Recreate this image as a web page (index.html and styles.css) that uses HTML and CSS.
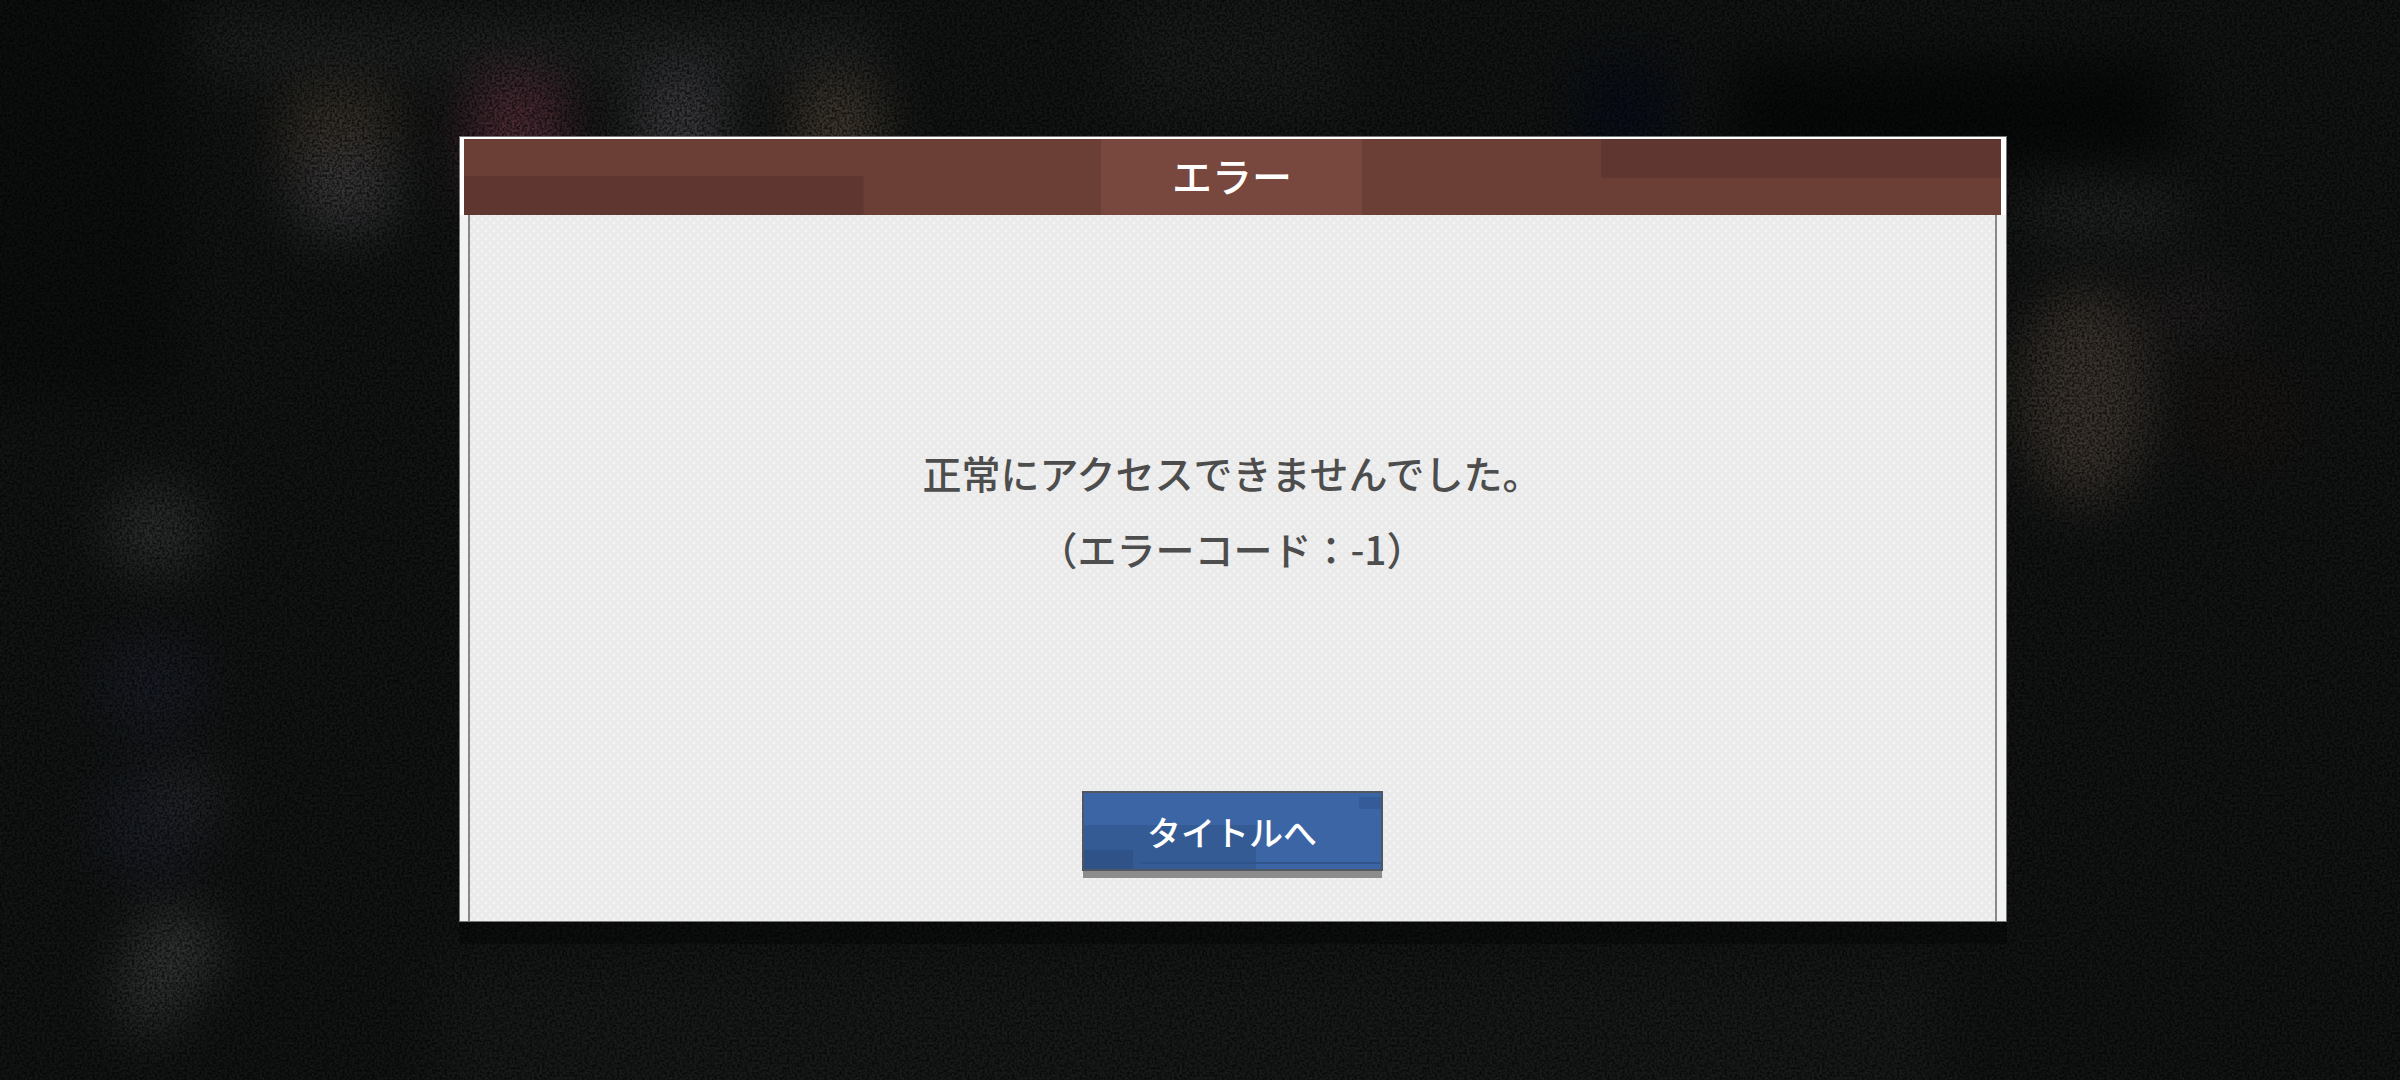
FILE: index.html
```html
<!DOCTYPE html>
<html lang="ja">

<head>
    <title>エラー</title>
    <meta charset="UTF-8">
    <meta name="viewport" content="width=device-width, initial-scale=1.0">
    <link rel="stylesheet" href="styles.css">
</head>

<body>
    <!-- ぼかした背景 -->
    <svg class="backdrop" viewBox="0 0 2400 1080" preserveAspectRatio="xMidYMid slice" aria-hidden="true">
        <filter id="blur" filterUnits="userSpaceOnUse" x="-200" y="-200" width="2800" height="1480" color-interpolation-filters="sRGB">
            <feGaussianBlur stdDeviation="26" />
        </filter>
        <g filter="url(#blur)">
            <rect x="-200" y="-200" width="2800" height="1480" fill="#121514" />
            <rect x="-200" y="-200" width="380" height="600" fill="#0d0f0e" />
            <rect x="440" y="960" width="1500" height="320" fill="#181a19" />
            <rect x="200" y="20" width="680" height="50" fill="#202323" />
            <rect x="1120" y="0" width="220" height="120" fill="#191c1c" />
            <rect x="285" y="85" width="110" height="100" fill="#352f27" />
            <rect x="300" y="150" width="90" height="80" fill="#38373a" />
            <rect x="470" y="75" width="95" height="120" fill="#4c2a34" />
            <rect x="635" y="70" width="90" height="120" fill="#39383b" />
            <rect x="795" y="80" width="85" height="110" fill="#413930" />
            <rect x="1580" y="60" width="90" height="100" fill="#090d19" />
            <rect x="1730" y="60" width="440" height="110" fill="#080909" />
            <rect x="2030" y="180" width="150" height="60" fill="#202423" />
            <ellipse cx="2085" cy="395" rx="66" ry="110" fill="#3a332d" />
            <ellipse cx="2190" cy="310" rx="50" ry="36" fill="#221e1f" />
            <ellipse cx="2245" cy="415" rx="60" ry="50" fill="#1a1614" />
            <ellipse cx="157" cy="530" rx="50" ry="44" fill="#2d2f2f" />
            <ellipse cx="152" cy="685" rx="55" ry="50" fill="#191c25" />
            <ellipse cx="150" cy="825" rx="55" ry="55" fill="#1a1d26" />
            <ellipse cx="190" cy="795" rx="28" ry="28" fill="#2a2c2e" />
            <ellipse cx="175" cy="950" rx="44" ry="40" fill="#363737" />
            <ellipse cx="150" cy="995" rx="34" ry="40" fill="#303131" />
        </g>
    </svg>
    <svg class="grain" aria-hidden="true">
        <filter id="noise" x="0" y="0" width="100%" height="100%">
            <feTurbulence type="fractalNoise" baseFrequency="0.4" numOctaves="2" seed="4" />
            <feColorMatrix type="matrix" values="0 0 0 0 0  0 0 0 0 0  0 0 0 0 0  3 0 0 0 -1.1" />
        </filter>
        <rect width="100%" height="100%" filter="url(#noise)" />
    </svg>

    <main class="screen">
        <section class="dialog" role="alertdialog" aria-labelledby="dialogTitle" aria-describedby="dialogMessage">
            <h1 class="dialog-title" id="dialogTitle">エラー</h1>
            <div class="dialog-body">
                <div class="message" id="dialogMessage">
                    <p>正常にアクセスできませんでした。</p>
                    <p>（エラーコード：-1）</p>
                </div>
                <button type="button" class="title-button">タイトルへ</button>
            </div>
        </section>
    </main>
</body>

</html>
```

FILE: styles.css
```css
* {
    box-sizing: border-box;
}

body {
    position: relative;
    margin: 0;
    color: #4d4d4d;
    font-family: "Noto Sans CJK JP", sans-serif;
    font-weight: 500;
    background: #121514;
}

.backdrop,
.grain {
    position: absolute;
    top: 0;
    left: 0;
    width: 100%;
    height: 100%;
}

.grain {
    opacity: 0.6;
}

.screen {
    position: relative;
    display: flex;
    align-items: center;
    justify-content: center;
    min-height: 100vh;
    padding: 0 0 22px 65px;
}

.dialog {
    display: flex;
    flex-direction: column;
    width: 64.5vw;
    min-height: 72.8vh;
    padding: 2px 5px 0 4px;
    border: 1px solid #777;
    background: linear-gradient(#fff 78px, #f2f2f2 78px);
    box-shadow: 0 22px 0 rgba(0, 0, 0, 0.3);
}

.dialog-title {
    height: 76px;
    margin: 0;
    color: #fff;
    font-size: 40px;
    font-weight: 500;
    line-height: 72px;
    text-align: center;
    background:
        linear-gradient(#5f3730, #5f3730) left bottom / 26% 39px no-repeat,
        linear-gradient(#5f3730, #5f3730) right top / 26% 39px no-repeat,
        linear-gradient(#78483e, #78483e) center / 17% 100% no-repeat,
        #6b3f36;
}

.dialog-body {
    display: flex;
    flex: 1;
    flex-direction: column;
    align-items: center;
    margin: 0 4px;
    padding: 14px 16px 50px;
    border: solid #888;
    border-width: 0 2px;
    background:
        radial-gradient(circle, #f3f3f3 1px, transparent 2px) 0 0 / 8px 8px,
        radial-gradient(circle, #f3f3f3 1px, transparent 2px) 4px 4px / 8px 8px,
        #eaeaea;
}

.message {
    display: flex;
    flex: 1;
    flex-direction: column;
    justify-content: center;
    font-size: 39px;
    line-height: 76px;
    text-align: center;
}

.message p {
    margin: 0;
}

.title-button {
    min-width: 301px;
    height: 80px;
    padding: 0 16px;
    border: 2px solid #505762;
    color: #fff;
    font: inherit;
    font-size: 34px;
    box-shadow: 0 8px 0 -1px #8c8c8c;
    background:
        linear-gradient(#30558d, #30558d) right bottom 5px / 81% 2px no-repeat,
        linear-gradient(#355b98, #355b98) right top 4px / 22px 12px no-repeat,
        linear-gradient(#2f5389, #2f5389) left bottom / 49px 19px no-repeat,
        linear-gradient(#345b93, #345b93) left bottom / 58% 44px no-repeat,
        #3b65a4;
    cursor: pointer;
}
```
